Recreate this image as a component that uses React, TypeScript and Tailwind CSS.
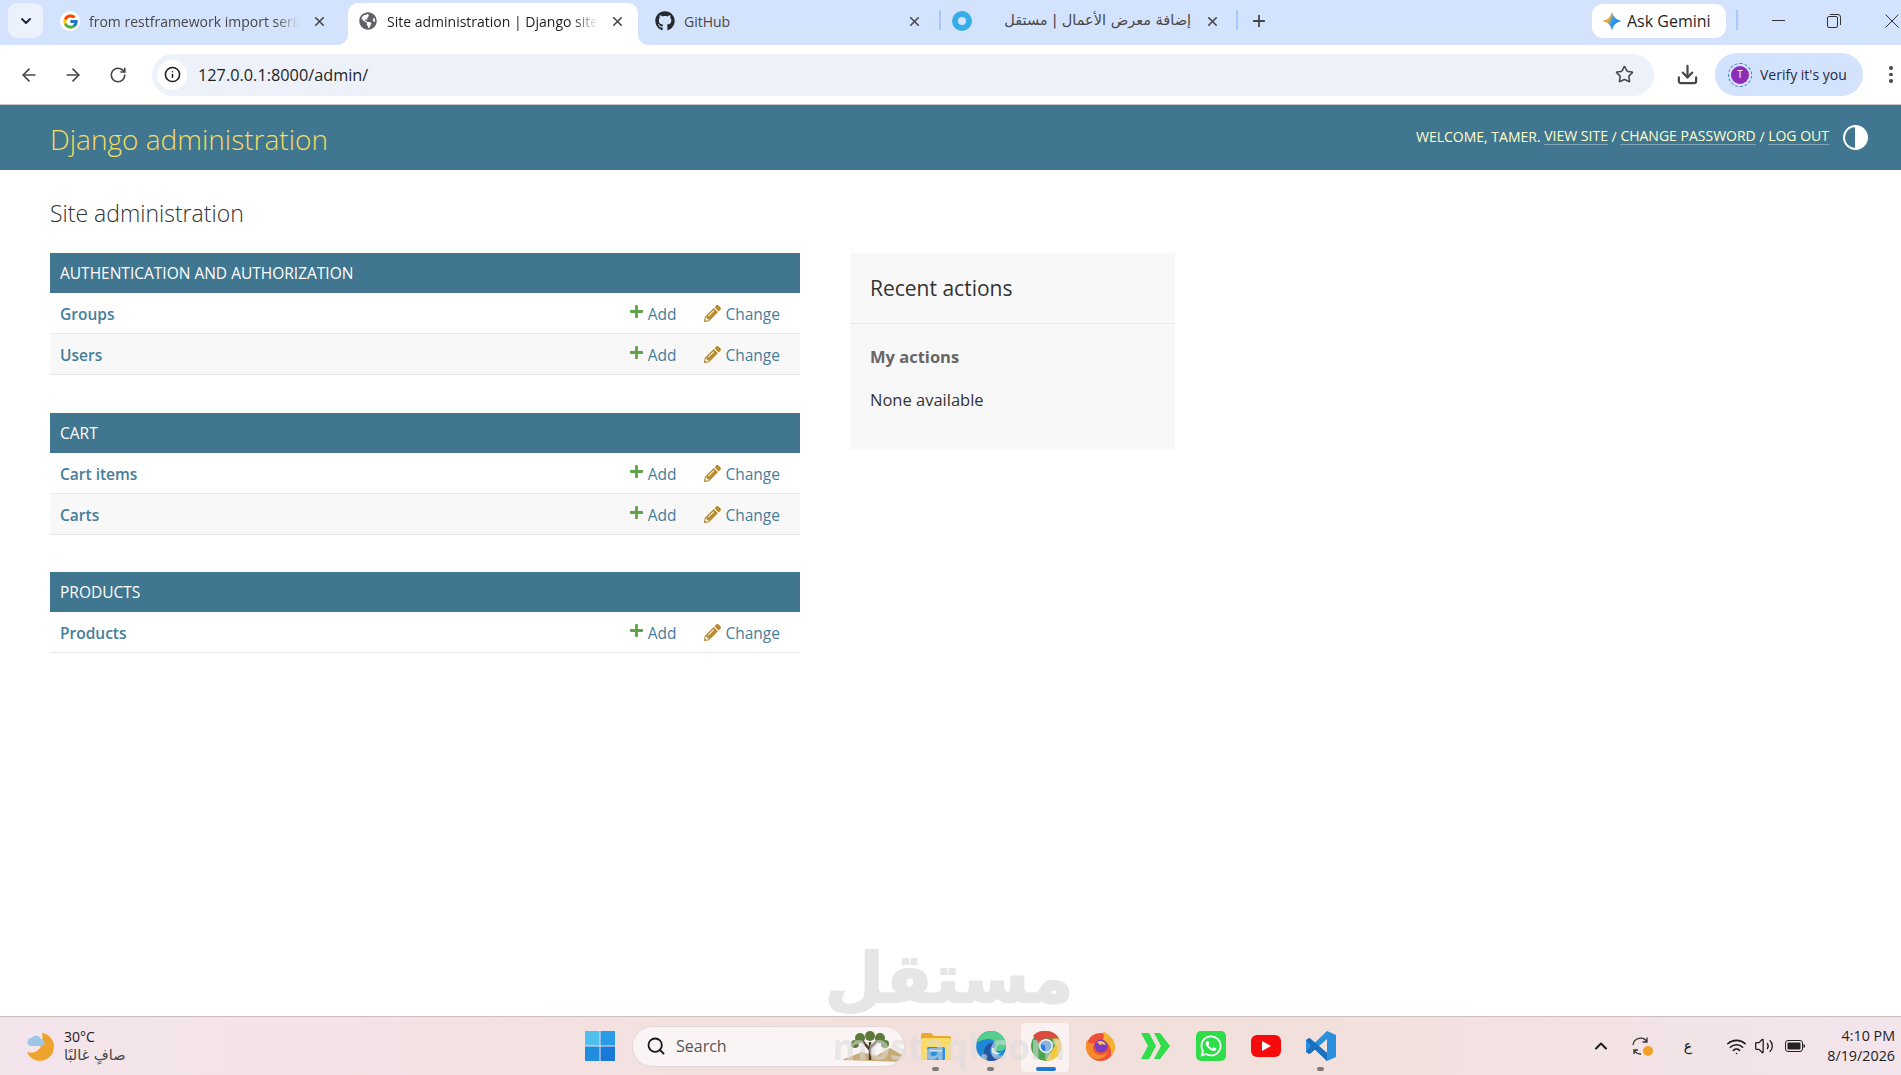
import { ArrowLeft, ArrowRight, ChevronDown, ChevronUp, Download, Info, Plus, RotateCw, Search, Star, Volume2, Wifi, X } from 'lucide-react'
import { FaGithub, FaGlobeAmericas, FaPencilAlt, FaPlus, FaWhatsapp } from 'react-icons/fa'
import { FcGoogle } from 'react-icons/fc'

const modules = [
  { name: 'AUTHENTICATION AND AUTHORIZATION', rows: ['Groups', 'Users'], gap: 'mb-[38px]' },
  { name: 'CART', rows: ['Cart items', 'Carts'], gap: 'mb-[37px]' },
  { name: 'PRODUCTS', rows: ['Products'], gap: '' },
]

function Tab({ title, icon, active, fade }: { title: string; icon: React.ReactNode; active?: boolean; fade?: boolean }) {
  return (
    <div className={`relative flex h-[42px] w-[290px] items-center pb-[6px] ${active ? 'rounded-t-[10px] bg-white text-[#1f1f1f]' : 'text-[#474747]'}`}>
      {active && <span className="absolute bottom-0 left-[-10px] h-[10px] w-[10px] bg-[radial-gradient(circle_at_0_0,transparent_9.5px,white_10px)]" />}
      {active && <span className="absolute bottom-0 right-[-10px] h-[10px] w-[10px] bg-[radial-gradient(circle_at_100%_0,transparent_9.5px,white_10px)]" />}
      <span className="ml-[10px] flex w-[20px] shrink-0 items-center justify-center">{icon}</span>
      <span className={`ml-[9px] flex-1 overflow-hidden whitespace-nowrap text-[14px] ${fade ? '[mask-image:linear-gradient(to_right,black_88%,transparent)]' : ''}`}>{title}</span>
      <X size={15} strokeWidth={2.6} className="ml-[12px] mr-[13px] shrink-0 text-[#474747]" />
    </div>
  )
}

function TabStrip() {
  return (
    <div className="flex h-[45px] items-end bg-[#d3e3fd]">
      <div className="mb-[7px] ml-[8px] flex h-[35px] w-[35px] items-center justify-center rounded-[9px] bg-[#ecf2fd]">
        <ChevronDown size={16} strokeWidth={3} className="text-[#1f2a44]" />
      </div>
      <div className="ml-[7px] mr-[8px]">
        <Tab title="from restframework import serializers" fade icon={<span className="flex h-[20px] w-[20px] items-center justify-center rounded-full bg-white"><FcGoogle size={17} /></span>} />
      </div>
      <Tab active title="Site administration | Django site admin" fade icon={<FaGlobeAmericas size={18} className="text-[#5f6368]" />} />
      <div className="ml-[7px] mr-[4px]">
        <Tab title="GitHub" icon={<FaGithub size={20} className="text-[#24292f]" />} />
      </div>
      <div className="mb-[15px] h-[20px] w-[2px] bg-[#a8c7fa]" />
      <div className="ml-[1px]">
        <div className="flex h-[42px] w-[294px] items-center pb-[6px] text-[#474747]">
          <span className="ml-[10px] h-[20px] w-[20px] rounded-full border-[6px] border-[#35ade6] bg-[#d3e3fd]" />
          <span dir="rtl" className="ml-[32px] w-[187px] whitespace-nowrap font-['DejaVu_Sans',sans-serif] text-[14.5px]">إضافة معرض الأعمال | مستقل</span>
          <X size={15} strokeWidth={2.6} className="ml-[14px] shrink-0" />
        </div>
      </div>
      <div className="mb-[15px] h-[20px] w-[2px] bg-[#a8c7fa]" />
      <Plus size={18} strokeWidth={2.4} className="mb-[15px] ml-[12px] text-[#474747]" />
      <div className="mb-[7px] ml-[324px] flex h-[34px] w-[134px] items-center rounded-[11px] bg-white">
        <svg width="20" height="20" viewBox="0 0 24 24" className="ml-[10px]">
          <defs>
            <linearGradient id="gem" x1="0" y1="0.2" x2="1" y2="0.6">
              <stop offset="0" stopColor="#e8563f" />
              <stop offset="0.35" stopColor="#f5b32f" />
              <stop offset="0.55" stopColor="#2f9cf0" />
              <stop offset="1" stopColor="#1d78e0" />
            </linearGradient>
          </defs>
          <path d="M12 0c1 6.500 5 11 12 12-7 1-11 5.500-12 12-1-6.500-5-11-12-12 7-1 11-5.500 12-12z" fill="url(#gem)" />
        </svg>
        <span className="ml-[5px] whitespace-nowrap text-[16px] font-medium text-[#1f1f1f]">Ask Gemini</span>
      </div>
      <div className="mb-[15px] ml-[10px] h-[20px] w-[2px] bg-[#a8c7fa]" />
      <div className="mb-[15px] ml-[34px] h-[1px] w-[13px] translate-y-[-9px] bg-[#333]" />
      <svg width="14" height="14" viewBox="0 0 14 14" fill="none" stroke="#333" className="mb-[17px] ml-[42px]">
        <rect x="0.500" y="2.500" width="10" height="11" rx="1.500" />
        <path d="M3 0.500h8a2.500 2.500 0 0 1 2.500 2.500v8" />
      </svg>
      <svg width="14" height="14" viewBox="0 0 14 14" stroke="#333" className="mb-[17px] ml-[44px]">
        <path d="M0.500 0.500l13 13M13.500 0.500l-13 13" />
      </svg>
    </div>
  )
}

function Toolbar() {
  return (
    <div className="flex h-[60px] items-center border-b border-[#c8c8c8] bg-white text-[#474747]">
      <ArrowLeft size={20} className="ml-[19px]" />
      <ArrowRight size={20} className="ml-[24px]" />
      <RotateCw size={18} strokeWidth={2.200} className="ml-[26px]" />
      <div className="ml-[25px] flex h-[42px] w-[1502px] items-center rounded-full bg-[#edf2fa]">
        <span className="ml-[5px] flex h-[30px] w-[30px] items-center justify-center rounded-full bg-white">
          <Info size={17} strokeWidth={2.200} className="text-[#1f1f1f]" />
        </span>
        <span className="ml-[11px] flex-1 pt-[2px] text-[16.3px] text-[#1f1f1f]">127.0.0.1:8000/admin/</span>
        <Star size={19} strokeWidth={2} className="mr-[20px]" />
      </div>
      <Download size={23} strokeWidth={2.300} className="ml-[22px]" />
      <div className="ml-[16px] flex h-[43px] w-[148px] items-center rounded-full bg-[#d3e3fd]">
        <span className="ml-[13px] flex h-[24px] w-[24px] items-center justify-center rounded-full border border-dashed border-[#4d7ab0]">
          <span className="flex h-[18px] w-[18px] items-center justify-center rounded-full bg-[#8e2db5] text-[10px] text-white">T</span>
        </span>
        <span className="ml-[8px] whitespace-nowrap text-[14px] text-[#1f2a44]">Verify it's you</span>
      </div>
      <div className="ml-[26px] flex flex-col gap-[3px]">
        <span className="h-[3.500px] w-[3.500px] rounded-full bg-[#474747]" />
        <span className="h-[3.500px] w-[3.500px] rounded-full bg-[#474747]" />
        <span className="h-[3.500px] w-[3.500px] rounded-full bg-[#474747]" />
      </div>
    </div>
  )
}

function AdminHeader() {
  return (
    <div className="flex h-[65px] items-center justify-between bg-[#417690] pl-[50px] pr-[33px]">
      <div className="pt-[2px] text-[28px] font-light text-[#f5dd5d]">Django administration</div>
      <div className="flex items-center">
        <div className="flex items-center whitespace-nowrap pb-[3px] text-[14px] text-[#ffffcc]">
          <span>WELCOME, <strong className="font-medium">TAMER</strong>.&nbsp;</span>
          <a className="border-b border-[#7fa3b5] leading-[17px]">VIEW SITE</a>
          <span>&nbsp;/&nbsp;</span>
          <a className="border-b border-[#7fa3b5] leading-[17px]">CHANGE PASSWORD</a>
          <span>&nbsp;/&nbsp;</span>
          <a className="border-b border-[#7fa3b5] leading-[17px]">LOG OUT</a>
        </div>
        <span className="ml-[14px] h-[25px] w-[25px] rounded-full border-[2px] border-white bg-[linear-gradient(to_right,#417690_50%,white_50%)]" />
      </div>
    </div>
  )
}

function AppModule({ name, rows, gap }: { name: string; rows: string[]; gap: string }) {
  return (
    <div className={gap}>
      <div className="flex h-[40px] items-center bg-[#417690] pl-[10px] pt-[2px] text-[15.5px] text-white">{name}</div>
      {rows.map((row, i) => (
        <div key={row} className={`flex h-[41px] items-center border-b border-[#e8e8e8] pl-[10px] pr-[20px] pt-[3px] text-[15.5px] text-[#447e9b] ${i % 2 ? 'bg-[#f8f8f8]' : 'bg-white'}`}>
          <a className="flex-1 font-semibold">{row}</a>
          <FaPlus size={15} className="mb-[6px] text-[#5fa24a]" />
          <a className="ml-[4px]">Add</a>
          <FaPencilAlt size={17} className="mb-[2px] ml-[28px] text-[#b88b2e]" />
          <a className="ml-[4px]">Change</a>
        </div>
      ))}
    </div>
  )
}

function RecentActions() {
  return (
    <div className="ml-[50px] h-[196px] w-[325px] bg-[#f8f8f8]">
      <div className="flex h-[71px] items-center border-b border-[#e8e8e8] pl-[20px] pt-[2px] text-[21px] text-[#333]">Recent actions</div>
      <div className="pl-[20px] pt-[21px] text-[#333]">
        <div className="text-[16.5px] font-bold text-[#666]">My actions</div>
        <div className="mt-[18px] text-[16.5px]">None available</div>
      </div>
    </div>
  )
}

function Folder() {
  return (
    <svg width="30" height="28" viewBox="0 0 30 28">
      <path d="M0 3a2 2 0 0 1 2-2h8l3 3h15a2 2 0 0 1 2 2v20a2 2 0 0 1-2 2H2a2 2 0 0 1-2-2z" fill="#e8a92c" />
      <rect y="6" width="30" height="22" rx="2" fill="#fadb66" />
      <rect x="6" y="15" width="18" height="13" rx="1.500" fill="#2a8fe0" />
      <rect x="9" y="18" width="12" height="1.500" fill="#cfe8fb" />
    </svg>
  )
}

function Edge() {
  return (
    <svg width="30" height="30" viewBox="0 0 30 30">
      <circle cx="15" cy="15" r="15" fill="#1e88d8" />
      <path d="M1 10C4 3 10 0 15 0c8 0 15 6 15 14 0 4-3 6-7 6-3 0-5-1-5-3 3-2 2-9-5-9-7 0-11 4-12 2z" fill="#56cf8e" />
      <path d="M15 30c-6 0-7-5-7-9 0-5 4-9 9-9 2 0 3 1 3 1-3 0-6 3-6 7s3 6 7 6c3 0 6-1 7-3-2 4-7 7-13 7z" fill="#26549f" />
      <path d="M18 17c0 3 3 5 6 5l2-1c-2 2-5 3-8 2-2-1-3-3-2-6z" fill="#f5f5f5" />
    </svg>
  )
}

function Chrome() {
  return (
    <svg width="30" height="30" viewBox="0 0 30 30">
      <circle cx="15" cy="15" r="15" fill="#4aa34f" />
      <path d="M15 0a15 15 0 0 1 13 7.500H15a7.500 7.500 0 0 0-7 4.700L2 4.800A15 15 0 0 1 15 0z" fill="#dd4b3e" />
      <path d="M28 7.500A15 15 0 0 1 15 30l6.500-11.300a7.500 7.500 0 0 0 0-11.200z" fill="#f6c83a" />
      <circle cx="15" cy="15" r="7" fill="#fff" />
      <circle cx="15" cy="15" r="5.500" fill="#2a80e0" />
    </svg>
  )
}

function Firefox() {
  return (
    <svg width="29" height="30" viewBox="0 0 29 30">
      <circle cx="14.500" cy="16" r="14" fill="#ee4f38" />
      <path d="M17 0c8 5 12 10 12 16 0 4-2 7-4 9 1-8-3-14-8-16 1-3 1-6 0-9z" fill="#f7b232" />
      <path d="M1 9c2 5 7 3 9 3-4 3-4 9 1 11 5 2 9 0 11-3-1 5-6 9-12 8C4 27 0 22 0 16c0-2 0-5 1-7z" fill="#f48a2c" />
      <circle cx="15" cy="15" r="6.500" fill="#7a3cc0" />
      <path d="M11 11c3-2 8-1 9 3-2-1-5-1-6 0z" fill="#f9c74f" />
    </svg>
  )
}

function TaskIcon({ children, dot, active }: { children: React.ReactNode; dot?: boolean; active?: boolean }) {
  return (
    <div className="relative flex h-[59px] w-[55px] items-center justify-center pb-[1px]">
      {active && <span className="absolute left-[3px] top-[6px] h-[49px] w-[48px] rounded-[4px] bg-[#faf2f1]" />}
      <span className="relative flex">{children}</span>
      {dot && <span className="absolute left-[24px] top-[50px] h-[4px] w-[7px] rounded-full bg-[#7d7a7a]" />}
      {active && <span className="absolute left-[18px] top-[50px] h-[4px] w-[20px] rounded-full bg-[#1f78d1]" />}
    </div>
  )
}

function Taskbar() {
  return (
    <div className="flex h-[59px] shrink-0 items-center border-t border-[#c9bdbd] bg-[linear-gradient(to_right,#f3e5ec,#f3e0dd_45%,#f2e0dd_70%,#f3e5ec)]">
      <div className="flex w-[585px] items-center pl-[25px]">
        <svg width="30" height="30" viewBox="0 0 30 30">
          <path d="M17 2a14 14 0 1 1-15 19c8 3 18-3 15-19z" fill="#eea32c" />
          <path d="M6 15a4 4 0 0 1 1-8 5 5 0 0 1 9 1 3.500 3.500 0 0 1 0 7z" fill="#9ec4e6" />
        </svg>
        <div className="ml-[9px] flex flex-col">
          <span className="text-[14px] leading-[19px] text-[#1a1a1a]">30°C</span>
          <span dir="rtl" className="text-left font-['DejaVu_Sans',sans-serif] text-[14.5px] leading-[19px] text-[#444]">صافٍ غالبًا</span>
        </div>
      </div>
      <svg width="30" height="30" viewBox="0 0 30 30">
        <rect width="14.500" height="14.500" fill="#4fc0ec" />
        <rect x="15.500" width="14.500" height="14.500" fill="#2a9be6" />
        <rect y="15.500" width="14.500" height="14.500" fill="#1f8ce0" />
        <rect x="15.500" y="15.500" width="14.500" height="14.500" fill="#1a78d6" />
      </svg>
      <div className="ml-[17px] flex h-[41px] w-[273px] items-center overflow-hidden rounded-full border border-[#e3d8d8] bg-[#fbf4f4]">
        <Search size={20} strokeWidth={2.200} className="ml-[13px] text-[#1a1a1a]" />
        <span className="ml-[10px] flex-1 text-[16px] text-[#555]">Search</span>
        <svg width="64" height="32" viewBox="0 0 64 32">
          <path d="M2 30l20-8 14 4 14-8 14 8v6z" fill="#c9ab78" />
          <path d="M30 30V12M30 20L20 8M30 18l10-10" stroke="#4b3a2a" strokeWidth="2.500" fill="none" />
          <g fill="#5b7a3a">
            <circle cx="20" cy="8" r="5" /><circle cx="30" cy="6" r="5" /><circle cx="40" cy="8" r="5" /><circle cx="15" cy="14" r="4" /><circle cx="45" cy="14" r="4" />
          </g>
        </svg>
      </div>
      <div className="ml-[3px] flex">
        <TaskIcon dot><Folder /></TaskIcon>
        <TaskIcon dot><Edge /></TaskIcon>
        <TaskIcon active><Chrome /></TaskIcon>
        <TaskIcon><Firefox /></TaskIcon>
        <TaskIcon>
          <svg width="29" height="26" viewBox="0 0 29 26" fill="#2fdc4a">
            <path d="M0 0h8l7 13-7 13H0l7-13zM13 0h6l10 13-10 13h-6l7-13z" />
          </svg>
        </TaskIcon>
        <TaskIcon>
          <span className="flex h-[30px] w-[30px] items-center justify-center rounded-[5px] bg-[#2fdc4a]"><FaWhatsapp size={24} className="text-white" /></span>
        </TaskIcon>
        <TaskIcon>
          <span className="flex h-[22px] w-[30px] items-center justify-center rounded-[6px] bg-[#f50b0b]">
            <svg width="10" height="10" viewBox="0 0 10 10" fill="white"><path d="M1 0l9 5-9 5z" /></svg>
          </span>
        </TaskIcon>
        <TaskIcon dot>
          <svg width="30" height="30" viewBox="0 0 30 30">
            <path d="M21 0l9 4v22l-9 4-12-11.500-5.500 4.500L0 21v-12l3.500-2L9 11.500z" fill="#2a8fdc" />
            <path d="M21 8l-8 7 8 7z" fill="#f3e1df" />
            <path d="M0 9l3.500-2L21 22v8L9 18.500 3.500 23 0 21l5-6z" fill="#1a6fc0" />
          </svg>
        </TaskIcon>
      </div>
      <div className="ml-auto flex items-center text-[#1a1a1a]">
        <span className="flex w-[40px] justify-center"><ChevronUp size={20} strokeWidth={2.400} /></span>
        <span className="relative flex w-[40px] justify-center">
          <svg width="20" height="20" viewBox="0 0 20 20" fill="none" stroke="#333" strokeWidth="1.300">
            <path d="M2 9a7.500 7.500 0 0 1 14-3M16 1.500V6h-4.500M3 18v-4h4M3 14a7.500 7.500 0 0 0 7 4" />
          </svg>
          <span className="absolute left-[22px] top-[10px] h-[10px] w-[10px] rounded-full bg-[#f0a028]" />
        </span>
        <span className="flex w-[54px] justify-center font-['DejaVu_Sans',sans-serif] text-[14px]">ع</span>
        <span className="flex w-[42px] justify-center"><Wifi size={21} strokeWidth={1.800} /></span>
        <span className="flex w-[14px] justify-center"><Volume2 size={20} strokeWidth={1.500} className="shrink-0" /></span>
        <span className="flex w-[48px] justify-center">
          <svg width="20" height="12" viewBox="0 0 20 12">
            <rect x="0.500" y="0.500" width="17" height="11" rx="2.500" fill="none" stroke="#222" />
            <rect x="2.500" y="2.500" width="13" height="7" rx="1" fill="#222" />
            <path d="M18.500 4l1.500 1v2l-1.500 1z" fill="#222" />
          </svg>
        </span>
        <div className="mr-[6px] w-[76px] whitespace-nowrap text-right text-[14.3px] leading-[20px] text-[#222]">
          <div>4:10 PM</div>
          <div>8/19/2026</div>
        </div>
      </div>
    </div>
  )
}

function Watermark() {
  return (
    <div className="pointer-events-none absolute left-[835px] top-[933px] flex w-[228px] flex-col items-center text-[#dcdcdc] opacity-70">
      <span className="font-['DejaVu_Sans',sans-serif] text-[68px] font-bold leading-[92px] [-webkit-text-stroke:2px_#dcdcdc]">مستقل</span>
      <span className="mt-[2px] whitespace-nowrap font-['Open_Sans',sans-serif] text-[36px] font-bold leading-[40px] opacity-80">mostaql.com</span>
    </div>
  )
}

export default function App() {
  return (
    <div className="relative flex h-[1075px] w-[1901px] flex-col overflow-hidden bg-white font-['Open_Sans',sans-serif]">
      <TabStrip />
      <Toolbar />
      <AdminHeader />
      <div className="flex-1 px-[50px]">
        <h1 className="pt-[27px] text-[23px] font-light leading-[32px] text-[#333]">Site administration</h1>
        <div className="mt-[24px] flex items-start">
          <div className="w-[750px]">
            {modules.map((m) => (
              <AppModule key={m.name} {...m} />
            ))}
          </div>
          <RecentActions />
        </div>
      </div>
      <Taskbar />
      <Watermark />
    </div>
  )
}
